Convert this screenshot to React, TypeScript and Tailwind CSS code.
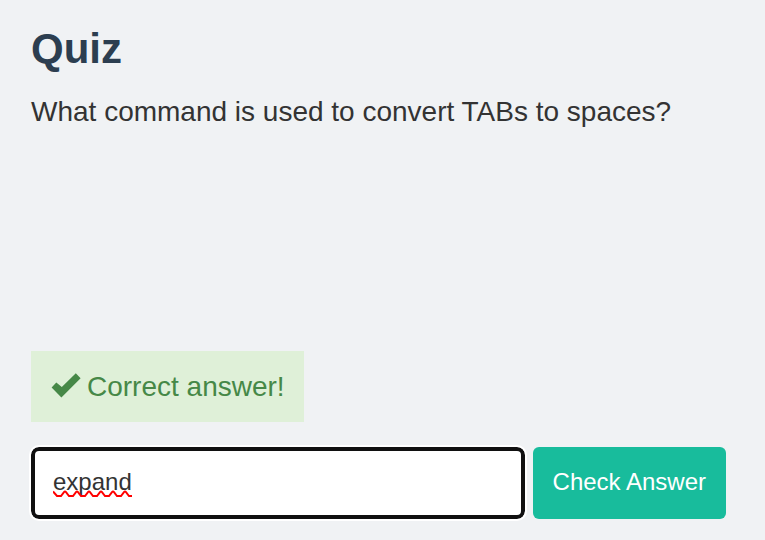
import React, { useState } from "react";

export default function App() {
  const [answer, setAnswer] = useState("expand");
  return (
    <main className="flex min-h-screen flex-col bg-[#f0f2f4] pt-[25px] pr-[39px] pb-[21px] pl-[31px] font-['Liberation_Sans',Arial,sans-serif] text-[#333]">
      <h1 className="text-[42px] leading-12 font-bold text-[#2c3e50]">Quiz</h1>
      <p className="mt-[19px] text-[28px] leading-10">What command is used to convert TABs to spaces?</p>
      <form className="mt-auto flex flex-col gap-[25px]" onSubmit={(e) => e.preventDefault()}>
        <div role="status" className="flex h-[71px] items-center gap-[7px] self-start bg-[#dff0d8] pr-[19px] pl-5 text-[28px] text-[#468847]">
          <svg className="h-7 w-[29px] overflow-visible" viewBox="0 0 29 28" fill="currentColor" aria-hidden="true">
            <path d="M0.6 14.5 5.3 9.4 10.8 14 24.8 0.3 29.6 5.2 10.4 24.4Z" />
          </svg>
          <span>Correct answer!</span>
        </div>
        <div className="flex h-[72px] gap-2">
          <div className="relative flex min-w-0 flex-1">
            <input
              aria-label="Answer"
              type="text"
              value={answer}
              spellCheck={false}
              onChange={(e) => setAnswer(e.target.value)}
              className="w-full rounded-lg border-4 border-[#101010] bg-white px-[18px] pb-0.5 text-2xl text-[#333] outline-2 outline-white"
            />
            {answer === "expand" && (
              <svg
                className="pointer-events-none absolute top-[43px] left-[22px] h-2 w-[79px]"
                viewBox="0 0 79 8"
                fill="none"
                stroke="#f00"
                strokeWidth="2"
                aria-hidden="true"
              >
                <path d="M0 1.5 4 6H8L11 2.2Q12 1 13 2.2L16 6H20L23 2.2Q24 1 25 2.2L28 6H32L35 2.2Q36 1 37 2.2L40 6H44L47 2.2Q48 1 49 2.2L52 6H56L59 2.2Q60 1 61 2.2L64 6H68L71 2.2Q72 1 73 2.2L76 6H79" />
              </svg>
            )}
          </div>
          <button type="submit" className="rounded-md bg-[#18bc9c] px-5 pb-0.5 text-2xl text-white">Check Answer</button>
        </div>
      </form>
    </main>
  );
}
